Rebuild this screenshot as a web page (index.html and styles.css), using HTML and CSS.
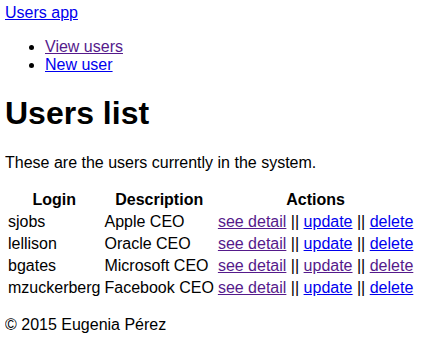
FILE: index.html
```html
<!DOCTYPE html>
<html lang="en">
<head>
    <meta charset="UTF-8">
    <title>Users app</title>
    <link rel="stylesheet" href="styles.css">
</head>
<body>
    <div class="header">
        <a href="#home">Users app</a>
    </div>

    <ul class="nav">
        <li><a href="#users" class="visited">View users</a></li>
        <li><a href="#new">New user</a></li>
    </ul>

    <h1>Users list</h1>
    <p>These are the users currently in the system.</p>

    <table class="users">
        <thead>
            <tr>
                <th>Login</th>
                <th>Description</th>
                <th>Actions</th>
            </tr>
        </thead>
        <tbody>
            <tr>
                <td>sjobs</td>
                <td>Apple CEO</td>
                <td><a href="#" class="visited">see detail</a> || <a href="#">update</a> || <a href="#">delete</a></td>
            </tr>
            <tr>
                <td>lellison</td>
                <td>Oracle CEO</td>
                <td><a href="#" class="visited">see detail</a> || <a href="#">update</a> || <a href="#">delete</a></td>
            </tr>
            <tr>
                <td>bgates</td>
                <td>Microsoft CEO</td>
                <td><a href="#" class="visited">see detail</a> || <a href="#" class="visited">update</a> || <a href="#" class="visited">delete</a></td>
            </tr>
            <tr>
                <td>mzuckerberg</td>
                <td>Facebook CEO</td>
                <td><a href="#" class="visited">see detail</a> || <a href="#">update</a> || <a href="#">delete</a></td>
            </tr>
        </tbody>
    </table>

    <div class="footer">
        <p>&copy; 2015 Eugenia Pérez</p>
    </div>
</body>
</html>
```

FILE: styles.css
```css
body {
    margin: 4px 5px;
    font-family: 'Liberation Sans', Arial, sans-serif;
    font-size: 16px;
    color: #000;
    background: #fff;
}

a {
    color: #0000ee;
}

a.visited {
    color: #551a8b;
}

.nav {
    margin: 16px 0 14px;
}

.users td {
    padding: 1px;
}
```
